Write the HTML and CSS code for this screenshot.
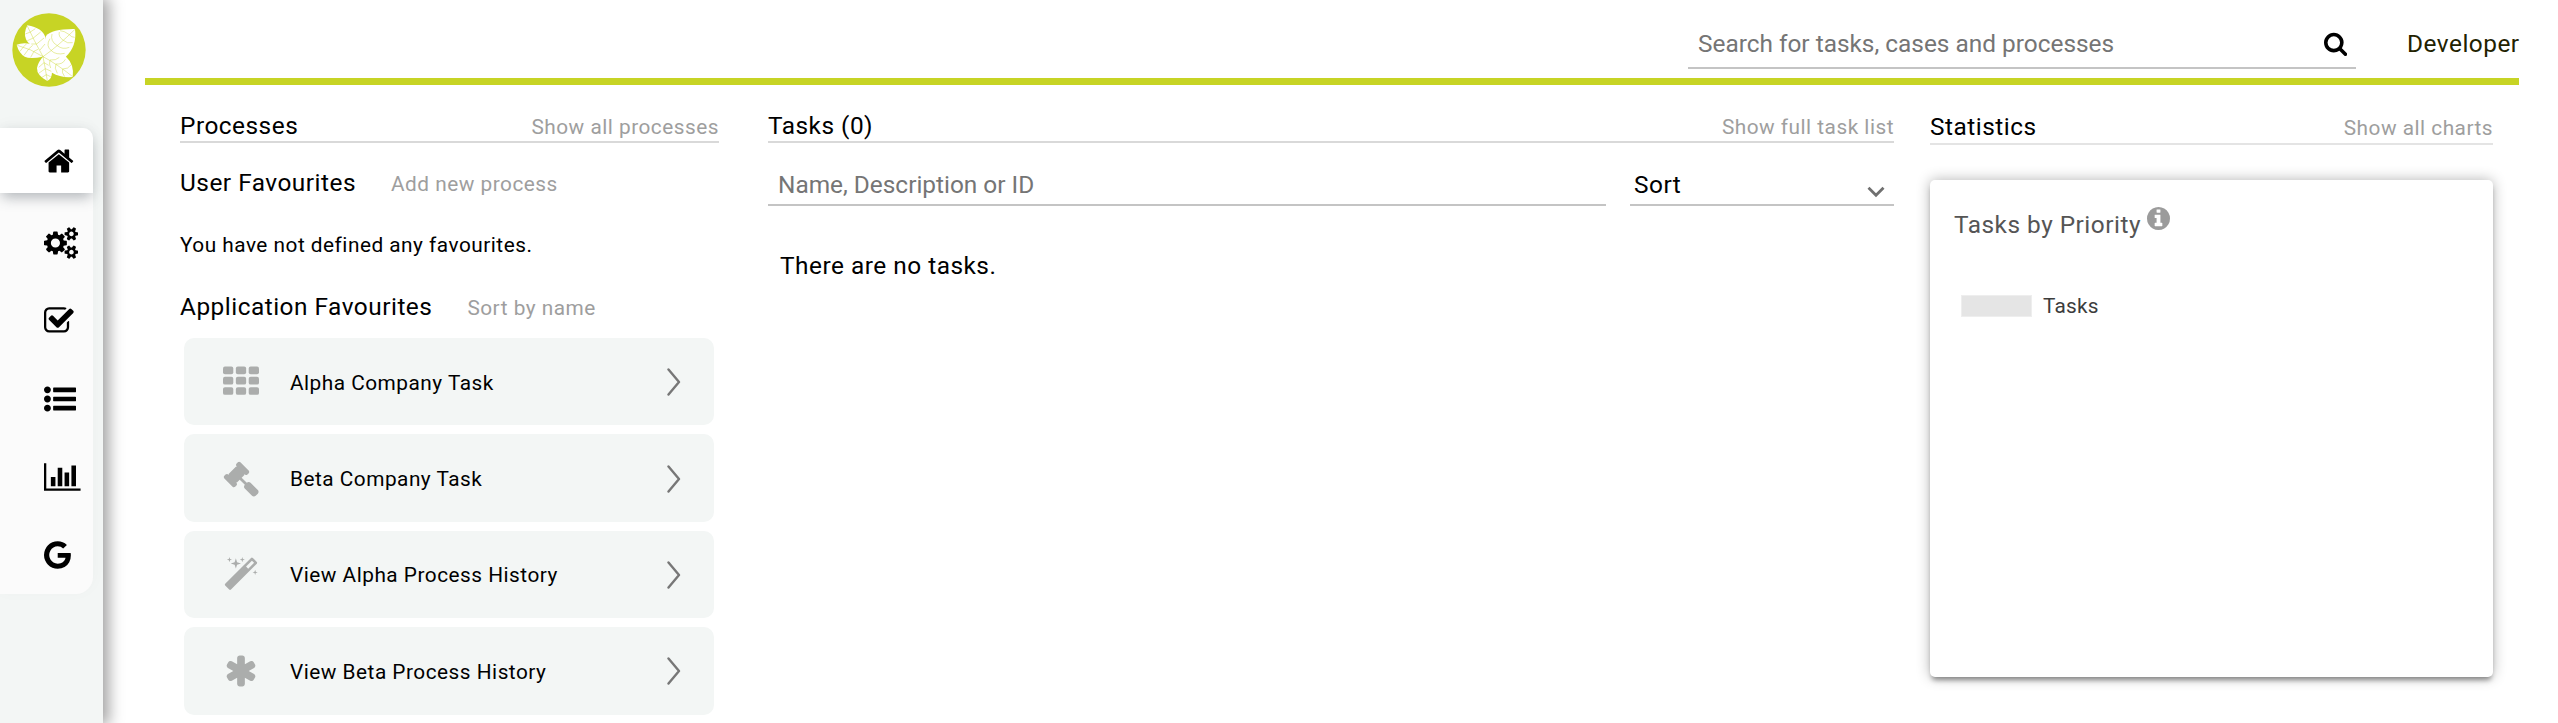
FILE: index.html
```html
<!DOCTYPE html>
<html lang="en">
<head>
<meta charset="utf-8">
<title>Home</title>
<link rel="stylesheet" href="styles.css">
</head>
<body>
<div class="app">
  <aside class="sidebar">
    <svg class="logo" viewBox="35 39 220 222">
      <circle cx="145" cy="150" r="110" fill="#c7d425"/>
      <g fill="#fff">
        <path d="M80 76Q68 100 76 118Q82 132 98 138Q114 148 127 170Q136 134 134 112Q126 84 80 76Z"/>
        <path d="M48 134Q54 158 72 170Q88 178 127 170Q116 140 92 132Q66 126 48 134Z"/>
        <path d="M223 87Q154 86 136 108Q126 138 127 170Q160 178 194 172Q230 138 223 87Z"/>
        <path d="M216 231Q222 194 194 168Q160 162 127 170Q138 200 154 218Q180 234 216 231Z"/>
        <path d="M140 243Q108 226 109 204Q112 186 127 170Q152 190 154 216Q154 236 140 243Z"/>
      </g>
      <g fill="none" stroke="#c7d425" stroke-width="1.3">
        <path d="M80 78Q98 118 127 170Q170 140 223 88M50 136Q90 146 127 170Q166 190 216 230M127 170Q134 206 140 242"/>
        <path d="M89 96L74 102M98 114L80 122M108 132L92 132M89 96L104 86M98 114L120 96M108 132L130 114M118 150L133 132"/>
        <path d="M68 141L58 154M84 147L70 166M100 154L90 172M68 141L78 131M84 147L96 136M100 154L112 148"/>
        <path d="M206 104Q190 92 178 92M188 121Q172 110 176 96M170 137Q148 124 154 102M152 152Q134 138 148 116M206 104Q212 112 222 112M188 121Q200 132 216 128M170 137Q186 150 206 142M152 152Q166 166 192 160"/>
        <path d="M148 180Q166 182 176 172M166 192Q186 194 194 178M186 207Q202 208 212 194M148 180Q144 192 150 204M166 192Q160 204 170 220M186 207Q182 218 192 230"/>
        <path d="M130 188L114 202M134 206L114 220M137 224L124 232M130 188L144 196M134 206L152 214M137 224L150 230"/>
      </g>
    </svg>
    <nav class="menu">
      <a class="menu-item active"><svg class="icon" viewBox="64 0 1664 1792"><path d="M1472 992v480q0 26-19 45t-45 19h-384v-384h-256v384h-384q-26 0-45-19t-19-45v-480q0-1 .5-3t.5-3l575-474 575 474q1 2 1 6zm223-69l-62 74q-8 9-21 11h-3q-13 0-21-7l-692-577-692 577q-12 8-24 7-13-2-21-11l-62-74q-8-10-7-23.5t11-21.5l719-599q32-26 76-26t76 26l244 204v-195q0-14 9-23t23-9h192q14 0 23 9t9 23v408l219 182q10 8 11 21.5t-7 23.5z"/></svg></a>
      <a class="menu-item"><svg class="icon" viewBox="-64 0 1920 1792"><path d="M832 896q0-106-75-181t-181-75-181 75-75 181 75 181 181 75 181-75 75-181zm768 512q0-52-38-90t-90-38-90 38-38 90q0 53 37.5 90.5t90.5 37.5 90.5-37.5 37.5-90.5zm0-1024q0-52-38-90t-90-38-90 38-38 90q0 53 37.5 90.5t90.5 37.5 90.5-37.5 37.5-90.5zm-384 421v185q0 10-7 19.5t-16 10.5l-155 24q-11 35-32 76 34 48 90 115 7 11 7 20 0 12-7 19-23 30-82.5 89.5t-78.5 59.5q-11 0-21-7l-115-90q-37 19-77 31-11 108-23 155-7 24-30 24h-186q-11 0-20-7.5t-10-17.5l-23-153q-34-10-75-31l-118 89q-7 7-20 7-11 0-21-8-144-133-144-160 0-9 7-19 10-14 41-53t47-61q-23-44-35-82l-152-24q-10-1-17-9.5t-7-19.5v-185q0-10 7-19.5t16-10.5l155-24q11-35 32-76-34-48-90-115-7-11-7-20 0-12 7-20 22-30 82-89t79-59q11 0 21 7l115 90q34-18 77-32 11-108 23-154 7-24 30-24h186q11 0 20 7.5t10 17.5l23 153q34 10 75 31l118-89q8-7 20-7 11 0 21 8 144 133 144 160 0 8-7 19-12 16-42 54t-45 60q23 48 34 82l152 23q10 2 17 10.5t7 19.5zm640 533v140q0 16-149 31-12 27-30 52 51 113 51 138 0 4-4 7-122 71-124 71-8 0-46-47t-52-68q-20 2-30 2t-30-2q-14 21-52 68t-46 47q-2 0-124-71-4-3-4-7 0-25 51-138-18-25-30-52-149-15-149-31v-140q0-16 149-31 13-29 30-52-51-113-51-138 0-4 4-7 4-2 35-20t59-34 30-16q8 0 46 46.5t52 67.5q20-2 30-2t30 2q51-71 92-112l6-2q4 0 124 70 4 3 4 7 0 25-51 138 17 23 30 52 149 15 149 31zm0-1024v140q0 16-149 31-12 27-30 52 51 113 51 138 0 4-4 7-122 71-124 71-8 0-46-47t-52-68q-20 2-30 2t-30-2q-14 21-52 68t-46 47q-2 0-124-71-4-3-4-7 0-25 51-138-18-25-30-52-149-15-149-31v-140q0-16 149-31 13-29 30-52-51-113-51-138 0-4 4-7 4-2 35-20t59-34 30-16q8 0 46 46.5t52 67.5q20-2 30-2t30 2q51-71 92-112l6-2q4 0 124 70 4 3 4 7 0 25-51 138 17 23 30 52 149 15 149 31z"/></svg></a>
      <a class="menu-item"><svg class="icon" viewBox="64 0 1664 1792"><path d="M1472 930v318q0 119-84.5 203.5t-203.5 84.5h-832q-119 0-203.5-84.5t-84.5-203.5v-832q0-119 84.5-203.5t203.5-84.5h832q63 0 117 25 15 7 18 23 3 17-9 29l-49 49q-10 10-23 10-3 0-9-2-23-6-45-6h-832q-66 0-113 47t-47 113v832q0 66 47 113t113 47h832q66 0 113-47t47-113v-254q0-13 9-22l64-64q10-10 23-10 6 0 12 3 20 8 20 29zm231-489l-814 814q-24 24-57 24t-57-24l-430-430q-24-24-24-57t24-57l110-110q24-24 57-24t57 24l263 263 647-647q24-24 57-24t57 24l110 110q24 24 24 57t-24 57z"/></svg></a>
      <a class="menu-item"><svg class="icon" viewBox="0 0 1792 1792"><path d="M384 1408q0 80-56 136t-136 56-136-56-56-136 56-136 136-56 136 56 56 136zm0-512q0 80-56 136t-136 56-136-56-56-136 56-136 136-56 136 56 56 136zm1408 416v192q0 13-9.5 22.5t-22.5 9.5h-1216q-13 0-22.5-9.5t-9.5-22.5v-192q0-13 9.5-22.5t22.5-9.5h1216q13 0 22.5 9.5t9.5 22.5zm-1408-928q0 80-56 136t-136 56-136-56-56-136 56-136 136-56 136 56 56 136zm1408 416v192q0 13-9.5 22.5t-22.5 9.5h-1216q-13 0-22.5-9.5t-9.5-22.5v-192q0-13 9.5-22.5t22.5-9.5h1216q13 0 22.5 9.5t9.5 22.5zm0-512v192q0 13-9.5 22.5t-22.5 9.5h-1216q-13 0-22.5-9.5t-9.5-22.5v-192q0-13 9.5-22.5t22.5-9.5h1216q13 0 22.5 9.5t9.5 22.5z"/></svg></a>
      <a class="menu-item"><svg class="icon" viewBox="0 0 2048 1792"><path d="M640 896v512H384V896zM1024 384v1024H768V384zM2048 1536v128H0V128h128v1408zM1408 640v768h-256V640zM1792 256v1152h-256V256z"/></svg></a>
      <a class="menu-item"><svg class="icon" viewBox="128 0 1536 1792"><path d="M896 786h725q12 67 12 128 0 217-91 387.5t-259.5 266.5-386.5 96q-157 0-299-60.5t-245-163.5-163.5-245-60.5-299 60.5-299 163.5-245 245-163.5 299-60.5q300 0 515 201l-209 201q-123-119-306-119-129 0-238.5 65t-173.5 176.5-64 243.5 64 243.5 173.5 176.5 238.5 65q87 0 160-24t120-60 82-82 51.5-87 22.5-78h-436v-264z"/></svg></a>
    </nav>
  </aside>

  <div class="page">
    <header class="topbar">
      <div class="search">
        <input class="field" type="text" placeholder="Search for tasks, cases and processes">
        <svg class="search-icon" viewBox="64 0 1664 1792"><path d="M1216 832q0-185-131.5-316.5t-316.5-131.5-316.5 131.5-131.5 316.5 131.5 316.5 316.5 131.5 316.5-131.5 131.5-316.5zm512 832q0 52-38 90t-90 38q-54 0-90-38l-343-342q-179 124-399 124-143 0-273.5-55.5t-225-150-150-225-55.5-273.5 55.5-273.5 150-225 225-150 273.5-55.5 273.5 55.5 225 150 150 225 55.5 273.5q0 220-124 399l343 343q37 37 37 90z"/></svg>
      </div>
      <span class="user">Developer</span>
    </header>

    <main class="columns">
      <section class="processes">
        <div class="section-head"><h2 class="title">Processes</h2><a class="link">Show all processes</a></div>
        <div class="sub-head first"><h3 class="title">User Favourites</h3><a class="link">Add new process</a></div>
        <p class="note">You have not defined any favourites.</p>
        <div class="sub-head"><h3 class="title">Application Favourites</h3><a class="link">Sort by name</a></div>
        <ul class="cards">
          <li class="card">
            <span class="card-icon"><svg viewBox="0 0 1792 1792"><g><rect x="0" y="128" width="512" height="384" rx="96"/><rect x="640" y="128" width="512" height="384" rx="96"/><rect x="1280" y="128" width="512" height="384" rx="96"/><rect x="0" y="640" width="512" height="384" rx="96"/><rect x="640" y="640" width="512" height="384" rx="96"/><rect x="1280" y="640" width="512" height="384" rx="96"/><rect x="0" y="1152" width="512" height="384" rx="96"/><rect x="640" y="1152" width="512" height="384" rx="96"/><rect x="1280" y="1152" width="512" height="384" rx="96"/></g></svg></span>
            <span class="card-text">Alpha Company Task</span>
            <svg class="arrow" viewBox="0 0 14 28"><path d="M1.5 1.5L12 14L1.5 26.5"/></svg>
          </li>
          <li class="card">
            <span class="card-icon"><svg viewBox="0 0 1792 1792"><path d="M1771 1536q0 53-37 90l-107 108q-39 37-91 37-53 0-90-37l-363-364q-38-36-38-90 0-53 43-96l-256-256-126 126q-14 14-34 14t-34-14q2 2 12.5 12t12.5 13 10 11.5 10 13.5 6 13.5 5.5 16.5 1.5 18q0 38-28 68-3 3-16.5 18t-19 20.5-18.5 16.5-22 15.5-22 9-26 4.5q-40 0-68-28l-408-408q-28-28-28-68 0-13 4.5-26t9-22 15.5-22 16.5-18.5 20.5-19 18-16.5q30-28 68-28 10 0 18 1.5t16.5 5.5 13.5 6 13.5 10 11.5 10 13 12.5 12 12.5q-14-14-14-34t14-34l348-348q14-14 34-14t34 14q-2-2-12.5-12t-12.5-13-10-11.5-10-13.5-6-13.5-5.5-16.5-1.5-18q0-38 28-68 3-3 16.5-18t19-20.5 18.5-16.5 22-15.5 22-9 26-4.5q40 0 68 28l408 408q28 28 28 68 0 13-4.5 26t-9 22-15.5 22-16.5 18.5-20.5 19-18 16.5q-30 28-68 28-10 0-18-1.5t-16.5-5.5-13.5-6-13.5-10-11.5-10-13-12.5-12-12.5q14 14 14 34t-14 34l-126 126 256 256q43-43 96-43 52 0 91 37l363 363q37 39 37 91z"/></svg></span>
            <span class="card-text">Beta Company Task</span>
            <svg class="arrow" viewBox="0 0 14 28"><path d="M1.5 1.5L12 14L1.5 26.5"/></svg>
          </li>
          <li class="card">
            <span class="card-icon"><svg viewBox="0 0 1792 1792"><path d="M1254 581l293-293-107-107-293 293zm447-293q0 27-18 45l-1286 1286q-18 18-45 18t-45-18l-198-198q-18-18-18-45t18-45l1286-1286q18-18 45-18t45 18l198 198q18 18 18 45zm-1351-190l98 30-98 30-30 98-30-98-98-30 98-30 30-98zm350 162l196 60-196 60-60 196-60-196-196-60 196-60 60-196zm930 478l98 30-98 30-30 98-30-98-98-30 98-30 30-98zm-640-640l98 30-98 30-30 98-30-98-98-30 98-30 30-98z"/></svg></span>
            <span class="card-text">View Alpha Process History</span>
            <svg class="arrow" viewBox="0 0 14 28"><path d="M1.5 1.5L12 14L1.5 26.5"/></svg>
          </li>
          <li class="card">
            <span class="card-icon"><svg viewBox="0 0 1792 1792"><path d="M1546 1050q46 26 59.5 77.5t-12.5 97.5l-64 110q-26 46-77.5 59.5t-97.5-12.5l-266-153v307q0 52-38 90t-90 38h-128q-52 0-90-38t-38-90v-307l-266 153q-46 26-97.5 12.5t-77.5-59.5l-64-110q-26-46-12.5-97.5t59.5-77.5l266-154-266-154q-46-26-59.5-77.5t12.5-97.5l64-110q26-46 77.5-59.5t97.5 12.5l266 153v-307q0-52 38-90t90-38h128q52 0 90 38t38 90v307l266-153q46-26 97.5-12.5t77.5 59.5l64 110q26 46 12.5 97.5t-59.5 77.5l-266 154z"/></svg></span>
            <span class="card-text">View Beta Process History</span>
            <svg class="arrow" viewBox="0 0 14 28"><path d="M1.5 1.5L12 14L1.5 26.5"/></svg>
          </li>
        </ul>
      </section>

      <section class="tasks">
        <div class="section-head"><h2 class="title">Tasks (0)</h2><a class="link">Show full task list</a></div>
        <div class="filters">
          <div class="filter-name"><input class="field" type="text" placeholder="Name, Description or ID"></div>
          <div class="filter-sort"><span class="sort-label">Sort</span><svg class="sort-arrow" viewBox="0 0 18 12"><path d="M1.5 1.8L9 9.3L16.5 1.8"/></svg></div>
        </div>
        <p class="empty">There are no tasks.</p>
      </section>

      <section class="statistics">
        <div class="section-head light"><h2 class="title">Statistics</h2><a class="link">Show all charts</a></div>
        <div class="chart">
          <div class="chart-head">
            <h3 class="chart-title">Tasks by Priority</h3>
            <svg class="info" viewBox="128 128 1536 1536"><path d="M1152 1376v-160q0-14-9-23t-23-9h-96v-512q0-14-9-23t-23-9h-320q-14 0-23 9t-9 23v160q0 14 9 23t23 9h96v320h-96q-14 0-23 9t-9 23v160q0 14 9 23t23 9h448q14 0 23-9t9-23zm-128-896v-160q0-14-9-23t-23-9h-192q-14 0-23 9t-9 23v160q0 14 9 23t23 9h192q14 0 23-9t9-23zm640 416q0 209-103 385.5t-279.5 279.5-385.5 103-385.5-103-279.5-279.5-103-385.5 103-385.5 279.5-279.5 385.5-103 385.5 103 279.5 279.5 103 385.5z"/></svg>
          </div>
          <div class="legend"><span class="swatch"></span><span>Tasks</span></div>
        </div>
      </section>
    </main>
  </div>
</div>
</body>
</html>
```
FILE: styles.css
```css
* { box-sizing: border-box; }

body {
  margin: 0;
  background: #fff;
  color: #000;
  font-family: Roboto, "Liberation Sans", sans-serif;
  font-size: 20.8px;
  line-height: 24px;
  letter-spacing: 0.5px;
  overflow: hidden;
}

h2, h3, p, ul { margin: 0; padding: 0; font-weight: 400; }

.app { display: flex; height: 723px; }

.sidebar {
  width: 103px;
  flex: none;
  padding-top: 13px;
  background: #f3f6f5;
  box-shadow: 4px 0 14px 2px rgba(0, 0, 0, 0.36);
}

.logo { display: block; width: 74px; height: 74px; margin-left: 11.5px; }

.menu {
  width: 93px;
  height: 466px;
  margin-top: 41px;
  background: #fbfbfb;
  border-radius: 0 10px 17px 0;
  box-shadow: 0 -3px 16px rgba(0, 0, 0, 0.03);
}

.menu-item {
  display: flex;
  align-items: center;
  height: 78.1px;
  padding-left: 44px;
}

.menu-item.active {
  height: 65px;
  margin-bottom: 11px;
  background: #fff;
  border-radius: 0 10px 0 0;
  box-shadow: 0 6px 14px -2px rgba(60, 70, 80, 0.4);
}

.icon { display: block; height: 32px; }

.page { flex: 1; padding: 0 39px 0 42px; }

.topbar {
  display: flex;
  justify-content: flex-end;
  align-items: flex-end;
  height: 85px;
  padding-bottom: 9px;
  border-bottom: 7px solid #c7d425;
}

.search {
  display: flex;
  align-items: center;
  width: 668px;
  height: 41px;
  padding: 0 9px 8px 10px;
  border-bottom: 2px solid #c4c4c4;
}

.field {
  flex: 1;
  min-width: 0;
  width: 100%;
  height: 30px;
  padding: 0;
  border: 0;
  outline: 0;
  background: transparent;
  font: 24.4px/30px Roboto, "Liberation Sans", sans-serif;
}

.field::placeholder { color: #757575; opacity: 1; }

.search-icon { height: 25px; }

.user {
  width: 112px;
  margin: 0 0 10px 51px;
  font-size: 24.4px;
  line-height: 30px;
  color: #222200;
  white-space: nowrap;
}

.columns {
  display: grid;
  grid-template-columns: 539px 1126px 563px;
  column-gap: 49px;
  padding: 26px 0 0 35px;
}

.section-head {
  display: flex;
  align-items: baseline;
  justify-content: space-between;
  height: 32px;
  border-bottom: 2px solid #d9d9d9;
}

.section-head.light { border-color: #e4e4e4; }
.section-head.light .title { line-height: 28px; }

.title { font-size: 24.4px; line-height: 30px; }

.link { color: #9e9e9e; }

.sub-head { display: flex; align-items: baseline; gap: 35px; height: 30px; margin-top: 35px; }
.sub-head.first { margin-top: 25px; }

.note { margin-top: 35px; }

.cards {
  display: grid;
  gap: 9px;
  width: 530px;
  margin: 16px 0 0 4px;
  list-style: none;
}

.card {
  display: flex;
  align-items: center;
  height: 87.4px;
  padding: 1px 33px 0 39px;
  background: #f3f6f5;
  border-radius: 10px;
}

.card-icon { width: 67px; height: 36px; }
.card-icon svg { display: block; width: 36px; height: 36px; fill: #abadac; }
.card-text { flex: 1; padding-top: 1px; }

.arrow { width: 14px; height: 28px; fill: none; stroke: #777; stroke-width: 2.4; stroke-linecap: round; stroke-linejoin: round; }

.filters { display: flex; gap: 24px; margin-top: 27px; }

.filter-name {
  width: 838px;
  height: 36px;
  padding-left: 10px;
  border-bottom: 2px solid #c4c4c4;
}

.filter-sort {
  display: flex;
  justify-content: space-between;
  width: 264px;
  height: 36px;
  padding: 0 9px 0 4px;
  border-bottom: 2px solid #c4c4c4;
  font-size: 24.4px;
  line-height: 30px;
}

.sort-arrow { width: 18px; height: 12px; margin-top: 16px; fill: none; stroke: #707070; stroke-width: 2.8; }

.empty { margin: 45px 0 0 12px; font-size: 24.4px; line-height: 30px; }

.statistics { padding-top: 2px; margin-left: -13px; width: 563px; }

.chart {
  height: 497px;
  margin-top: 35px;
  padding: 27px 24px;
  border-radius: 5px;
  background: #fff;
  box-shadow: 0 5px 5px -2px rgba(0, 0, 0, 0.38), 0 0 14px rgba(0, 0, 0, 0.3);
}

.chart-head { display: flex; gap: 6px; height: 30px; }

.chart-title { margin-top: 3px; font-size: 24.4px; line-height: 30px; color: #555; }

.info { width: 23px; height: 23px; fill: #9b9b9b; }

.legend {
  display: flex;
  align-items: center;
  gap: 11px;
  margin: 57px 0 0 7px;
  color: #3c3c3c;
  letter-spacing: 0.2px;
}

.swatch { width: 71px; height: 22px; background: #e5e5e5; border: 1px solid #eee; }
```
